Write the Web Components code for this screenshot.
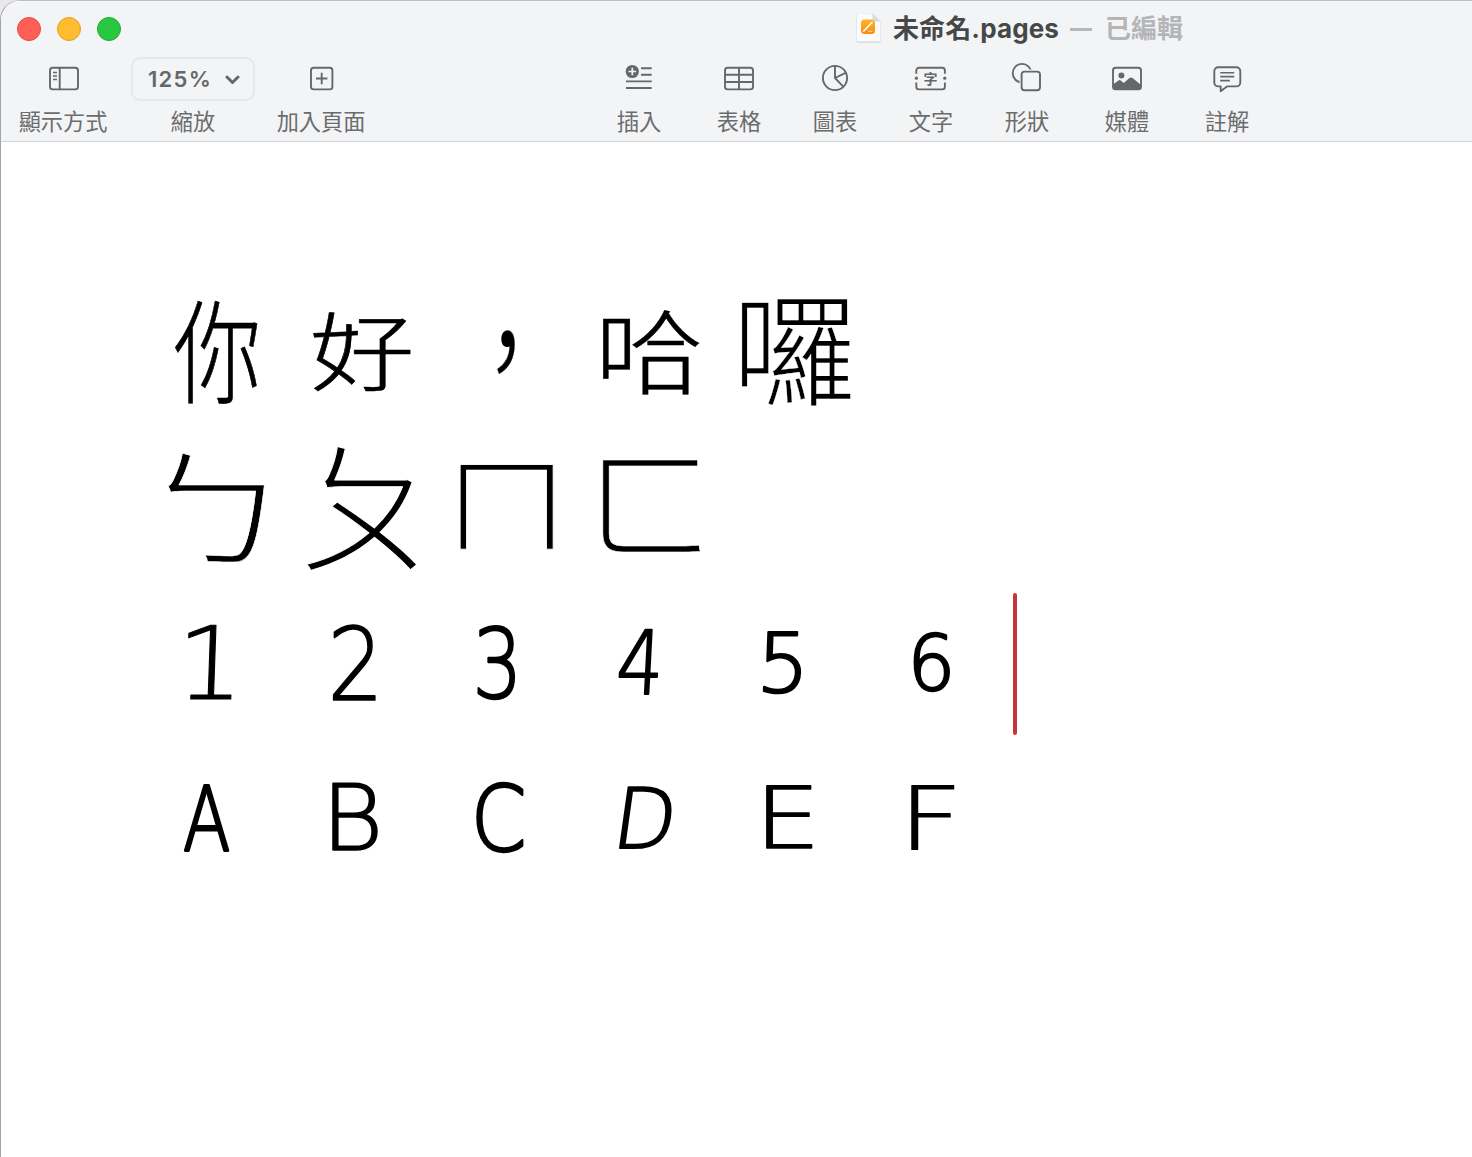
<!DOCTYPE html>
<html lang="zh-Hant">
<head>
<meta charset="utf-8">
<title>未命名.pages</title>
<style>
html,body{margin:0;height:100%;overflow:hidden;background:#e9e9eb}
</style>
</head>
<body>
<pages-window></pages-window>
<script>
const define = (name, html, setup) => customElements.define(name, class extends HTMLElement {
  connectedCallback() {
    if (this.shadowRoot) return;
    const t = document.createElement('template');
    t.innerHTML = html;
    this.attachShadow({mode: 'open'}).append(t.content.cloneNode(true));
    if (setup) setup(this, this.shadowRoot);
  }
});

const ICONS = {
  sidebar: '<rect x="9" y="10.8" width="28" height="21.6" rx="2.6"/><path d="M18.7 11v21"/><path stroke-width="1.4" d="M12 15.5h4M12 19h4M12 22.5h4"/>',
  add: '<rect x="12" y="10.8" width="21.4" height="21.6" rx="2.6"/><path d="M17 21.5h11.4M22.7 15.8v11.4"/>',
  insert: '<circle cx="15.3" cy="14.5" r="6.6" fill="#666769" stroke="none"/><path stroke="#f3f4f6" stroke-width="1.7" d="M11.5 14.5h7.6M15.3 10.7v7.6"/><path d="M24 11.2h10.7M24 17.8h10.7M9 24.4h25.7M9 31h25.7"/>',
  table: '<rect x="8" y="10.8" width="28" height="21.6" rx="2.6"/><path d="M22 11v21M8 17.7h28M8 25h28"/>',
  chart: '<circle cx="22" cy="21" r="12.1"/><path d="M22 9v12l8.5 8.8M22 21l11-5.4"/>',
  text: '<path d="M7.3 16.8v-3.4a2.6 2.6 0 0 1 2.6-2.6h23.4a2.6 2.6 0 0 1 2.6 2.6v3.4M7.3 25.5v4.3a2.6 2.6 0 0 0 2.6 2.6h23.4a2.6 2.6 0 0 0 2.6-2.6v-4.3"/><g fill="#666769" stroke="none"><circle cx="7.4" cy="21.2" r="1.6"/><circle cx="35.8" cy="21.2" r="1.6"/><text x="21.6" y="26.8" text-anchor="middle" font-size="14" font-weight="700" font-family="\'Noto Sans CJK TC\',sans-serif">字</text></g>',
  shape: '<circle cx="17" cy="16.2" r="9.3"/><rect x="16.6" y="14.6" width="18.4" height="18.6" rx="3" fill="#f3f4f6" stroke="#f3f4f6" stroke-width="4"/><rect x="16.6" y="14.6" width="18.4" height="18.6" rx="3"/>',
  media: '<rect x="8" y="10.8" width="28" height="21.6" rx="2.6"/><circle cx="16.4" cy="18.4" r="3" fill="#666769" stroke="none"/><path fill="#666769" stroke="none" d="M8 27.5l5.5-4q1.3-.9 2.5.2l2.8 2.3 5.6-4.9q1.6-1.4 3.2 0L36 28v4H8z"/>',
  comment: '<path stroke-linejoin="round" d="M13.3 10.2h18a4 4 0 0 1 4 4v11.2a4 4 0 0 1-4 4H22l-6.3 4.8v-4.8h-2.4a4 4 0 0 1-4-4V14.2a4 4 0 0 1 4-4z"/><path stroke-width="1.6" d="M15.2 15.7h14M15.2 19.6h14M15.2 23.6h9.7"/>'
};

define('tool-icon', `<style>:host{display:block;width:44px;height:44px}svg{display:block;fill:none;stroke:#666769;stroke-width:1.9;overflow:visible}</style><svg width="44" height="44"></svg>`,
  (el, root) => root.querySelector('svg').innerHTML = ICONS[el.getAttribute('name')]);

define('tool-item', `<style>
:host{display:flex;flex-direction:column;align-items:center;flex:none;width:var(--w);font:22.2px/38px "Noto Sans CJK TC",sans-serif;color:#6b6c6d;white-space:nowrap}
.l{height:38px}</style><slot name="control"></slot><div class="l"><slot></slot></div>`);

define('zoom-select', `<style>
:host{display:flex;box-sizing:border-box;width:124px;height:44px;border:2px solid #e6e7e9;border-radius:9px;align-items:center;padding:0 13px 0 15px;justify-content:space-between;font:600 22px/40px Inter,sans-serif;color:#666769;letter-spacing:1.3px}
svg{display:block}</style><span><slot></slot></span><svg width="15" height="10" fill="none" stroke="#666769" stroke-width="3" stroke-linecap="round" stroke-linejoin="round"><path d="M2 3l5.5 5.5L13 3"/></svg>`);

define('window-lights', `<style>:host{display:flex;gap:16px;flex:none}i{width:24px;height:24px;border-radius:50%;box-sizing:border-box;border:1px solid}
.r{background:#ff5f57;border-color:#e24a43}.y{background:#febc2e;border-color:#e0a028}.g{background:#28c840;border-color:#20ab33}</style><i class="r"></i><i class="y"></i><i class="g"></i>`);

define('doc-title', `<style>:host{display:flex;align-items:center;font:700 26px/40px Inter,"Noto Sans CJK TC",sans-serif;color:#464848;white-space:nowrap}
svg{display:block;margin:-2px 11px 0 -1px;overflow:visible}
.d{width:22px;height:3px;background:#b6b7b9;margin:1px 13px 0 11px}.e{color:#b4b5b7}.n{letter-spacing:.12px}</style>
<svg width="26" height="30"><defs><linearGradient id="o" x2="0" y2="1"><stop stop-color="#ffb52b"/><stop offset="1" stop-color="#fb8a13"/></linearGradient></defs>
<path d="M1.5 1.5h15l8 8v19q0 1-1 1h-22q-1 0-1-1v-26q0-1 1-1z" fill="#c6c7c9"/><path d="M1.5.6h15l8 8v19q0 1-1 1h-22q-1 0-1-1v-26q0-1 1-1z" fill="#fbfbfb" stroke="#e3e4e5" stroke-width=".6"/><path d="M16.5.6v6.5q0 1.5 1.5 1.5h6.5z" fill="#d9dadb"/><rect x="5" y="6.5" width="14" height="14.5" rx="3.5" fill="url(#o)"/><path d="M7.8 18L16 9.5" stroke="#fff" stroke-width="1.7" stroke-linecap="round"/><path d="M12 18.3h4.5" stroke="#ffd9a0" stroke-width="1"/></svg>
<span class="n"><slot></slot></span><span class="d"></span><span class="e"><slot name="state"></slot></span>`);

/* One character of the document, fitted to box="x y width height" inside its cell.
   A positive edge thickens the strokes, a negative one thins them. */
define('ink-glyph', `<style>:host{display:block;width:144px;height:155px;flex:none}svg{display:block;overflow:visible}text{stroke-linejoin:round;stroke-linecap:round}</style><svg width="144" height="155"><text></text></svg>`,
  (el, root) => {
    const ch = el.getAttribute('char'), [x, y, w, h] = el.getAttribute('box').split(' ').map(Number);
    const skew = Number(el.getAttribute('skew')), edge = Number(el.getAttribute('edge'));
    const latin = ch.charCodeAt(0) < 128;
    const family = latin ? '"DejaVu Sans Light","DejaVu Sans",sans-serif' : '"Noto Sans CJK TC",sans-serif';
    const weight = latin ? 200 : 300;
    const c = document.createElement('canvas').getContext('2d');
    c.font = `${weight} 100px ${family}`;
    const m = c.measureText(ch);
    const gw = m.actualBoundingBoxRight + m.actualBoundingBoxLeft, gh = m.actualBoundingBoxAscent + m.actualBoundingBoxDescent;
    const k = Math.tan(skew * Math.PI / 180);
    const sy = (h - edge) / gh, sx = (w - edge - Math.abs(k) * h) / gw;
    const t = root.querySelector('text');
    t.textContent = ch;
    t.setAttribute('style', `font:${weight} 100px ${family}`);
    t.setAttribute('fill', '#000');
    t.setAttribute('stroke', edge < 0 ? '#fff' : '#000');
    t.setAttribute('stroke-width', Math.abs(edge) / ((sx + sy) / 2));
    t.setAttribute('transform', `translate(${x + edge / 2} ${y + h - edge / 2}) matrix(1 0 ${-k} 1 0 0) scale(${sx} ${sy}) translate(${m.actualBoundingBoxLeft} ${-m.actualBoundingBoxDescent})`);
  });

define('ink-line', `<style>:host{display:flex;height:155px}</style><slot></slot>`);
define('text-caret', `<style>:host{display:block;width:4px;height:142px;margin:8px 0 0 -1px;border-radius:2px;background:#cb333b}</style>`);

/* char, x, y, width, height, edge, slant */
const LINES = [
  [['你',175,300,83,104,.6],['好',313,312,98,80,.6],['，',497,330,18,45,.2],['哈',603,309,97,86,.4],['囉',742,298,109,108,-.3]],
  [['ㄅ',168,453,97,109,-.6],['ㄆ',306,445,111,126,-1],['ㄇ',460,465,93,85,-.8],['ㄈ',603,461,97,91,-.6]],
  [['1',185,625,49,75,1.1,2],['2',332,624,44,77,1.6],['3',477,624,39,76,2.2],['4',617,629,44,67,2,3],['5',762,631,41,63,2.3,2],['6',913,632,37,60,2.4]],
  [['A',183,784,47,67,2.6],['B',332,783,46,68,1.7],['C',476,781,48,72,2.4],['D',619,786,57,63,2.1,8],['E',766,785,47,64,1.4],['F',911,785,44,65,1.3]]
];
const lines = LINES.map((line, r) => '<ink-line>' + line.map(([ch, x, y, w, h, e, s], i) =>
  `<ink-glyph char="${ch}" box="${x - 150 - 144 * i} ${y - 275 - 155 * r} ${w} ${h}" edge="${e}" skew="${s || 0}"></ink-glyph>`).join('') +
  (r === 2 ? '<text-caret></text-caret>' : '') + '</ink-line>').join('');

define('doc-page', `<style>:host{display:block;flex:1;background:#fff;padding:133px 0 0 149px}</style>${lines}`);

const item = (icon, label, gap) => `<tool-item style="margin-left:${gap}px;--w:${label.length * 22}px"><tool-icon slot="control" name="${icon}"></tool-icon>${label}</tool-item>`;
define('pages-window', `<style>
:host{display:flex;flex-direction:column;box-sizing:border-box;height:1157px;width:1472px;border-left:1px solid #a5a5a7;border-top:1px solid #bcbcbf;border-top-left-radius:20px;overflow:hidden;background:#fff}
header{box-sizing:border-box;height:141px;background:#f3f4f6;border-bottom:1px solid #d3d4d5;box-shadow:inset 0 1px #fafafb;flex:none}
.title{display:flex;height:56px;align-items:center;padding-left:16px}
doc-title{margin-left:736px}
.tools{display:flex;padding-left:18px}
</style>
<header><div class="title"><window-lights></window-lights><doc-title>未命名.pages<span slot="state">已編輯</span></doc-title></div>
<div class="tools">${item('sidebar','顯示方式',0)}<tool-item style="margin-left:24px;--w:124px"><zoom-select slot="control">125%</zoom-select>縮放</tool-item>${item('add','加入頁面',22)}${item('insert','插入',252)}${item('table','表格',56)}${item('chart','圖表',52)}${item('text','文字',52)}${item('shape','形狀',52)}${item('media','媒體',56)}${item('comment','註解',56)}</div></header>
<doc-page></doc-page>`);
</script>
</body>
</html>
